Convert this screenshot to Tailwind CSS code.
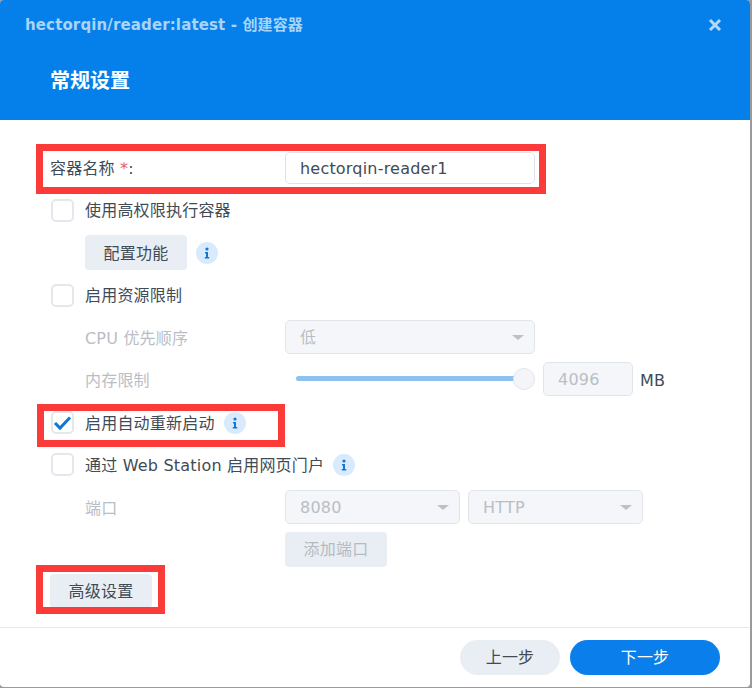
<!DOCTYPE html>
<html lang="zh-CN">
<head>
    <meta charset="UTF-8">
    <title>创建容器</title>
    <script src="https://cdn.jsdelivr.net/npm/@tailwindcss/browser@4"></script>
</head>
<body class="w-[752px] h-[688px] overflow-hidden bg-[#9a9a9a] font-['DejaVu_Sans','Noto_Sans_CJK_SC',sans-serif] text-[16px] tracking-[0.2px] text-[#414b55]">
    <div class="relative w-[750px] h-[687px] bg-white rounded-[4px] overflow-hidden flex flex-col">
        <!-- Header -->
        <div class="h-[120px] bg-[#0580ea] shrink-0 relative">
            <div class="pl-[25px] pt-[15px] h-[50px] leading-[20px] text-[15px] font-bold tracking-[0.13px] text-[#a9d4f8]">hectorqin/reader:latest - 创建容器</div>
            <div class="pl-[50px] pt-[1px] mt-[15px] leading-[30px] text-[20px] font-bold tracking-normal text-white">常规设置</div>
            <svg class="absolute left-[708px] top-[18px]" width="14" height="14" viewBox="0 0 14 14"><path d="M2 2 12 12M12 2 2 12" stroke="#b5daf9" stroke-width="3"/></svg>
        </div>

        <!-- Form -->
        <div class="flex-1 pl-[51px] pt-[32px] flex flex-col">
            <div class="flex items-center h-[32px]">
                <div class="w-[234px] pt-[2px] -ml-px">容器名称 <span class="text-[#e4605c]">*</span>:</div>
                <div class="w-[250px] h-[32px] ml-px pl-[14px] leading-[32px] border border-[#dfe3e8] rounded-[5px]">hectorqin-reader1</div>
            </div>

            <div class="flex items-center h-[24px] mt-[14px]">
                <div class="w-[23px] h-[23px] border-2 border-[#e4e7ec] rounded-[5px] bg-white"></div>
                <span class="ml-[11px] pt-[2px]">使用高权限执行容器</span>
            </div>
            <div class="flex items-center mt-[13px] ml-[34px]">
                <div class="w-[102px] h-[35px] leading-[37px] text-center bg-[#e9eef4] rounded-[4px]">配置功能</div>
                <svg class="ml-[9px]" width="22" height="22" viewBox="0 0 22 22"><circle cx="11" cy="11" r="11" fill="#d8eafb"/><circle cx="11" cy="7" r="1.6" fill="#1277d2"/><path d="M9 10h3v5h1.2v1.4H8.800V15H10v-3.600H9z" fill="#1277d2"/></svg>
            </div>

            <div class="flex items-center h-[24px] mt-[13px]">
                <div class="w-[23px] h-[23px] border-2 border-[#e4e7ec] rounded-[5px] bg-white"></div>
                <span class="ml-[11px] pt-[2px]">启用资源限制</span>
            </div>
            <div class="flex items-center h-[34px] mt-[13px] text-[#b9bec5]">
                <div class="w-[234px] pl-[34px] pt-[4px]">CPU 优先顺序</div>
                <div class="relative w-[250px] h-[34px] pl-[14px] leading-[34px] bg-[#f4f6f9] border border-[#e1e5ea] rounded-[5px]">低
                    <span class="absolute right-[10px] top-[14px] w-0 h-0 border-x-[6px] border-x-transparent border-t-[5px] border-t-[#bcc1c7]"></span>
                </div>
            </div>
            <div class="flex items-center h-[34px] mt-[8px] text-[#b9bec5]">
                <div class="w-[234px] pl-[34px] pt-[4px]">内存限制</div>
                <div class="relative w-[250px] h-[22px]">
                    <div class="absolute left-[11px] top-[8px] w-[220px] h-[5px] rounded-full bg-[#8ec2ee]"></div>
                    <div class="absolute right-0 top-0 w-[22px] h-[22px] rounded-full bg-[#f4f5f8] border border-[#e2e5ea]"></div>
                </div>
                <div class="w-[90px] h-[34px] ml-[8px] pl-[14px] leading-[34px] bg-[#f4f6f9] border border-[#e1e5ea] rounded-[5px]">4096</div>
                <span class="ml-[7px] pt-[4px] text-[#414b55]">MB</span>
            </div>

            <div class="flex items-center h-[23px] mt-[15px]">
                <div class="w-[23px] h-[23px] border-2 border-[#e4e7ec] rounded-[5px] bg-white flex items-center justify-center">
                    <svg width="19" height="16" viewBox="0 0 19 16"><path d="M2 8 7 13 17 2.500" fill="none" stroke="#1277d2" stroke-width="3"/></svg>
                </div>
                <span class="ml-[11px] pt-[2px]">启用自动重新启动</span>
                <svg class="ml-[9px]" width="22" height="22" viewBox="0 0 22 22"><circle cx="11" cy="11" r="11" fill="#d8eafb"/><circle cx="11" cy="7" r="1.6" fill="#1277d2"/><path d="M9 10h3v5h1.2v1.4H8.800V15H10v-3.600H9z" fill="#1277d2"/></svg>
            </div>
            <div class="flex items-center h-[23px] mt-[19px]">
                <div class="w-[23px] h-[23px] border-2 border-[#e4e7ec] rounded-[5px] bg-white"></div>
                <span class="ml-[11px] pt-[2px]">通过 Web Station 启用网页门户</span>
                <svg class="ml-[9px]" width="22" height="22" viewBox="0 0 22 22"><circle cx="11" cy="11" r="11" fill="#d8eafb"/><circle cx="11" cy="7" r="1.6" fill="#1277d2"/><path d="M9 10h3v5h1.2v1.4H8.800V15H10v-3.600H9z" fill="#1277d2"/></svg>
            </div>
            <div class="flex items-center h-[34px] mt-[14px] text-[#b9bec5]">
                <div class="w-[234px] pl-[34px] pt-[4px]">端口</div>
                <div class="relative w-[175px] h-[34px] pl-[14px] leading-[34px] bg-[#f4f6f9] border border-[#e1e5ea] rounded-[5px]">8080
                    <span class="absolute right-[10px] top-[14px] w-0 h-0 border-x-[6px] border-x-transparent border-t-[5px] border-t-[#bcc1c7]"></span>
                </div>
                <div class="relative w-[175px] h-[34px] ml-[8px] pl-[14px] leading-[34px] bg-[#f4f6f9] border border-[#e1e5ea] rounded-[5px]">HTTP
                    <span class="absolute right-[10px] top-[14px] w-0 h-0 border-x-[6px] border-x-transparent border-t-[5px] border-t-[#bcc1c7]"></span>
                </div>
            </div>
            <div class="w-[102px] h-[35px] leading-[36px] mt-[8px] ml-[234px] text-center bg-[#e9eef4] text-[#b5bbc3] rounded-[4px]">添加端口</div>
            <div class="w-[102px] h-[34px] leading-[35px] mt-[7px] -ml-px text-center bg-[#e9eef4] rounded-[4px]">高级设置</div>
        </div>

        <!-- Footer -->
        <div class="h-[60px] shrink-0 border-t border-[#e6e8eb] flex justify-end gap-[10px] pt-[12px] pr-[30px]">
            <div class="w-[100px] h-[35px] leading-[35px] text-center rounded-full bg-[#e9eef4]">上一步</div>
            <div class="w-[150px] h-[35px] leading-[35px] text-center rounded-full bg-[#0a7eea] text-white">下一步</div>
        </div>

        <!-- Red annotation boxes -->
        <div class="absolute left-[36px] top-[144px] w-[510px] h-[50px] border-[7px] border-[#fb3a3a]"></div>
        <div class="absolute left-[37px] top-[404px] w-[248px] h-[43px] border-[7px] border-[#fb3a3a]"></div>
        <div class="absolute left-[36px] top-[565px] w-[129px] h-[49px] border-[7px] border-[#fb3a3a]"></div>
    </div>
</body>
</html>
